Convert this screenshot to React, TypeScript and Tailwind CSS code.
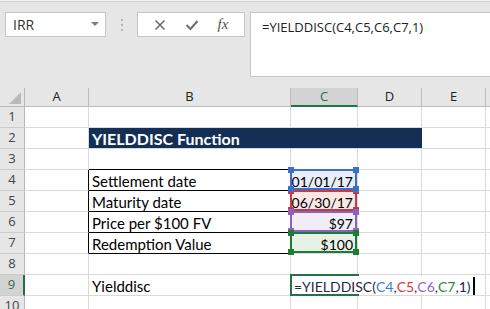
// Excel-like view: YIELDDISC example sheet with formula bar and range highlights.

import React from 'react'
import clsx from 'clsx'

const cellFace = "font-['Lato','Liberation_Sans',sans-serif] text-black"
const cellFont = clsx(cellFace, 'text-[15px]')
const uiFont = "font-['Open_Sans','Liberation_Sans',sans-serif]"

type Range = {
  border: string
  fill: string
  handle: string
  z: string
}

const ranges: Record<string, Range> = {
  blue: { border: 'border-[#3e6fc8]', fill: 'bg-[#e8eef9]', handle: 'bg-[#3e6fc8]', z: 'z-[2]' },
  red: { border: 'border-[#c9393d]', fill: 'bg-[#fbe8e6]', handle: 'bg-[#c9393d]', z: 'z-[1]' },
  purple: { border: 'border-[#8a62c2]', fill: 'bg-[#f2eef8]', handle: 'bg-[#8a62c2]', z: 'z-[3]' },
  green: { border: 'border-[#1e7b34]', fill: 'bg-[#e7f2e7]', handle: 'bg-[#1e7b34]', z: 'z-[4]' },
}

function RowHead({ n, active }: { n: number; active?: boolean }) {
  return (
    <div
      className={clsx(
        'w-[25px] shrink-0 flex items-center justify-center border-b border-b-[#cacaca] text-[13px]',
        uiFont,
        active
          ? 'bg-[#d3d3d3] border-r-2 border-r-[#217346] text-[#2f6b4a]'
          : 'bg-[#e6e6e6] border-r border-r-[#b8b8b8] text-[#444]'
      )}
    >
      {n}
    </div>
  )
}

function Cell({ w, className, children }: { w: string; className?: string; children?: React.ReactNode }) {
  return (
    <div
      className={clsx(
        'shrink-0 h-full bg-white border-r border-b border-[#dadada] flex items-center px-[3px] pt-[2px]',
        cellFont,
        w,
        className
      )}
    >
      {children}
    </div>
  )
}

function RangeCell({ range, children }: { range: Range; children: React.ReactNode }) {
  return (
    <div
      className={clsx(
        'relative shrink-0 w-[67px] h-full border-r border-b border-[#dadada] flex items-center justify-end pl-[3px] pr-[4px] pt-[2px] text-[14px]',
        cellFace,
        range.fill
      )}
    >
      {children}
      <div className={clsx('absolute -left-px -top-px right-0 bottom-0 border-2', range.border, range.z)}>
        <span className={clsx('absolute -left-[4px] -top-[4px] w-[6px] h-[6px]', range.handle)} />
        <span className={clsx('absolute -right-[4px] -top-[4px] w-[6px] h-[6px]', range.handle)} />
        <span className={clsx('absolute -left-[4px] -bottom-[4px] w-[6px] h-[6px]', range.handle)} />
        <span className={clsx('absolute -right-[4px] -bottom-[4px] w-[6px] h-[6px]', range.handle)} />
      </div>
    </div>
  )
}

function Row({ children }: { children: React.ReactNode }) {
  return <div className="flex h-[21px]">{children}</div>
}

function TableRow({ n, label, range, value }: { n: number; label: string; range: Range; value: string }) {
  return (
    <Row>
      <RowHead n={n} />
      <Cell w="w-[64px]" className="border-r-black" />
      <Cell w="w-[202px]" className="border-b-black">{label}</Cell>
      <RangeCell range={range}>{value}</RangeCell>
      <Cell w="w-[64px]" />
      <Cell w="w-[64px]" />
      <Cell w="w-[20px]" />
    </Row>
  )
}

function EmptyRow({ n, bBorder }: { n: number; bBorder?: boolean }) {
  return (
    <Row>
      <RowHead n={n} />
      <Cell w="w-[64px]" />
      <Cell w="w-[202px]" className={bBorder ? 'border-b-black' : undefined} />
      <Cell w="w-[67px]" />
      <Cell w="w-[64px]" />
      <Cell w="w-[64px]" />
      <Cell w="w-[20px]" />
    </Row>
  )
}

export default function App() {
  return (
    <div className="w-[490px] h-[309px] overflow-hidden bg-[#e6e6e6]">
      {/* Top edge */}
      <div className="h-[2px] bg-[#f2f2f2] border-b border-[#d0d0d0]" />

      {/* Name box + formula bar */}
      <div className="flex items-start pt-[10px] pb-[11px] pl-[5px]">
        <div className={clsx('w-[101px] h-[25px] bg-white border border-[#c6c6c6] flex items-center justify-between pl-[7px] pr-[6px] text-[14px] text-[#333]', uiFont)}>
          <span>IRR</span>
          <svg width="8" height="5" viewBox="0 0 8 5">
            <polygon points="0,0 8,0 4,4" fill="#7d7d7d" />
          </svg>
        </div>
        <div className="w-[31px] h-[25px] flex flex-col items-center justify-center gap-[3px]">
          <span className="w-[2px] h-[2px] bg-[#b4b4b4]" />
          <span className="w-[2px] h-[2px] bg-[#b4b4b4]" />
          <span className="w-[2px] h-[2px] bg-[#b4b4b4]" />
        </div>
        <div className="w-[108px] h-[25px] bg-white border border-[#c6c6c6] flex items-center justify-around px-[6px]">
          <svg width="12" height="12" viewBox="0 0 12 12">
            <path d="M1.5 1.5 L10.5 10.5 M10.5 1.5 L1.5 10.5" stroke="#6e6e6e" strokeWidth="1.6" fill="none" />
          </svg>
          <svg width="14" height="12" viewBox="0 0 14 12">
            <path d="M1.5 6 L5.5 10 L12.5 2" stroke="#6e6e6e" strokeWidth="2" fill="none" />
          </svg>
          <span className="font-['Liberation_Serif',serif] italic text-[15px] text-[#555] leading-none">fx</span>
        </div>
        <div className={clsx('flex-1 ml-[5px] h-[65px] bg-white border border-r-0 border-[#c6c6c6] pl-[11px] pt-[5px] text-[13px] text-[#222]', uiFont)}>
          =YIELDDISC(C4,C5,C6,C7,1)
        </div>
      </div>

      {/* Sheet */}
      <div className="bg-white">
        {/* Column headers */}
        <div className={clsx('flex h-[19px] text-[13px] text-[#222]', uiFont)}>
          <div className="w-[25px] shrink-0 bg-[#e6e6e6] border-r border-b border-[#b8b8b8] flex items-end justify-end pr-[3px] pb-[2px]">
            <svg width="12" height="12" viewBox="0 0 12 12">
              <polygon points="12,0 12,12 0,12" fill="#b9b9b9" />
            </svg>
          </div>
          <div className="w-[64px] shrink-0 bg-[#e6e6e6] border-r border-b border-[#bcbcbc] flex items-center justify-center">A</div>
          <div className="w-[202px] shrink-0 bg-[#e6e6e6] border-r border-b border-[#bcbcbc] flex items-center justify-center">B</div>
          <div className="w-[67px] shrink-0 bg-[#d3d3d3] border-r border-r-[#bcbcbc] border-b-2 border-b-[#217346] flex items-center justify-center text-[#2f6b4a]">C</div>
          <div className="w-[64px] shrink-0 bg-[#e6e6e6] border-r border-b border-[#bcbcbc] flex items-center justify-center">D</div>
          <div className="w-[64px] shrink-0 bg-[#e6e6e6] border-r border-b border-[#bcbcbc] flex items-center justify-center">E</div>
          <div className="flex-1 bg-[#e6e6e6] border-b border-[#bcbcbc]" />
        </div>

        <EmptyRow n={1} />

        {/* Title row */}
        <Row>
          <RowHead n={2} />
          <Cell w="w-[64px]" />
          <div className="w-[333px] shrink-0 h-full bg-[#132f56] border-b border-[#dadada] flex items-center px-[3px] pt-[1px] font-['Lato','Liberation_Sans',sans-serif] text-[16px] font-bold text-white">
            YIELDDISC Function
          </div>
          <Cell w="w-[64px]" />
          <Cell w="w-[20px]" />
        </Row>

        <EmptyRow n={3} bBorder />
        <TableRow n={4} label="Settlement date" range={ranges.blue} value="01/01/17" />
        <TableRow n={5} label="Maturity date" range={ranges.red} value="06/30/17" />
        <TableRow n={6} label="Price per $100 FV" range={ranges.purple} value="$97" />
        <TableRow n={7} label="Redemption Value" range={ranges.green} value="$100" />
        <EmptyRow n={8} />

        {/* Active editing row */}
        <Row>
          <RowHead n={9} active />
          <Cell w="w-[64px]" />
          <Cell w="w-[202px]">Yielddisc</Cell>
          <div className="relative shrink-0 w-[67px] h-full border-r border-b border-[#dadada]">
            <div className="absolute -left-px -top-px w-[69px] -bottom-px border-2 border-[#217346] z-[1]" />
            <div className={clsx('absolute left-[2px] top-[1px] bottom-[1px] z-[2] bg-white flex items-center pl-[1px] pr-[3px] pt-[2px] whitespace-nowrap text-[14px]', cellFace)}>
              <span className="text-[#1f2a44]">=YIELDDISC(</span>
              <span className="text-[#3e7bd6]">C4</span>
              <span className="text-[#1f2a44]">,</span>
              <span className="text-[#d13a3e]">C5</span>
              <span className="text-[#1f2a44]">,</span>
              <span className="text-[#9466cc]">C6</span>
              <span className="text-[#1f2a44]">,</span>
              <span className="text-[#2b8a4a]">C7</span>
              <span className="text-[#1f2a44]">,1)</span>
              <span className="ml-[2px] w-[2px] h-[18px] bg-black" />
            </div>
          </div>
          <Cell w="w-[64px]" />
          <Cell w="w-[64px]" />
          <Cell w="w-[20px]" />
        </Row>

        <EmptyRow n={10} />
      </div>
    </div>
  )
}
